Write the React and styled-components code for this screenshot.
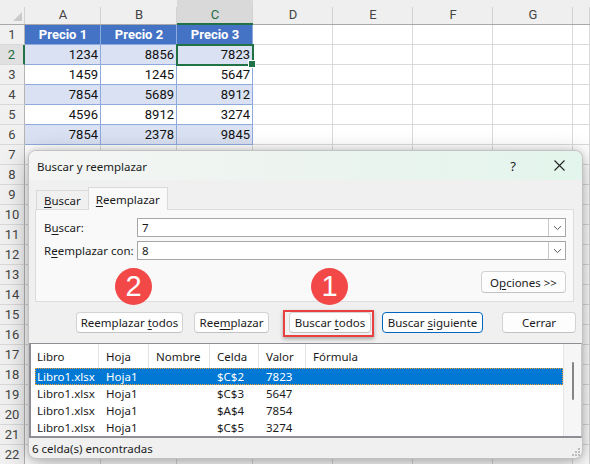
import styled, { createGlobalStyle, css } from 'styled-components';

const GlobalStyle = createGlobalStyle`
  html, body {
    margin: 0;
    padding: 0;
    background: #fff;
  }
  body {
    width: 590px;
    height: 464px;
    overflow: hidden;
  }
  * {
    box-sizing: border-box;
  }
`;

// la última columna solo asoma por el borde derecho, sin letra visible
const letters = ['A', 'B', 'C', 'D', 'E', 'F', 'G', ''];

const table = [
  ['Precio 1', 'Precio 2', 'Precio 3'],
  [1234, 8856, 7823],
  [1459, 1245, 5647],
  [7854, 5689, 8912],
  [4596, 8912, 3274],
  [7854, 2378, 9845],
];

const columns = [
  { label: 'Libro', w: 68 },
  { label: 'Hoja', w: 50 },
  { label: 'Nombre', w: 61 },
  { label: 'Celda', w: 49 },
  { label: 'Valor', w: 47 },
  { label: 'Fórmula' },
];

const results = [
  ['Libro1.xlsx', 'Hoja1', '', '$C$2', '7823'],
  ['Libro1.xlsx', 'Hoja1', '', '$C$3', '5647'],
  ['Libro1.xlsx', 'Hoja1', '', '$A$4', '7854'],
  ['Libro1.xlsx', 'Hoja1', '', '$C$5', '3274'],
];

const Screen = styled.div`
  position: relative;
  width: 590px;
  height: 464px;
  overflow: hidden;
  font-family: Roboto, 'Noto Sans', sans-serif;
`;

/* ---------- hoja de cálculo ---------- */

const Sheet = styled.div`
  display: grid;
  grid-template-columns: 25px 76px 76px 76px 80px 80px 80px 80px 17px;
  grid-template-rows: 25px;
  grid-auto-rows: 20px;
  width: max-content;
  font-size: 13px;
`;

const headLine = css`
  background: linear-gradient(#d2d2d2, #d2d2d2) right bottom / 1px 17px no-repeat,
    ${({ $active }) => ($active ? '#d9d9d9' : '#efefef')};
`;

const Corner = styled.div`
  position: relative;
  ${headLine};
  border-bottom: 1px solid #a8a8a8;

  &::after {
    content: '';
    position: absolute;
    right: 3px;
    bottom: 3px;
    width: 9px;
    height: 9px;
    background: #cacaca;
    clip-path: polygon(100% 0, 100% 100%, 0 100%);
  }
`;

const ColHead = styled.div`
  display: flex;
  align-items: center;
  justify-content: center;
  padding-top: 5px;
  color: ${({ $active }) => ($active ? '#1d6b40' : '#444')};
  ${headLine};
  border-bottom: ${({ $active }) =>
    $active ? '2px solid #217346' : '1px solid #a8a8a8'};
`;

const RowHead = styled.div`
  display: flex;
  align-items: center;
  justify-content: center;
  color: ${({ $active }) => ($active ? '#1d6b40' : '#444')};
  background: ${({ $active }) => ($active ? '#e0e0e0' : '#f0f0f0')};
  border-bottom: 1px solid #d8d8d8;
  border-right: ${({ $active }) =>
    $active ? '2px solid #217346' : '1px solid #b4b4b4'};
`;

const tones = {
  head: '#4472c4',
  band: '#d9e1f2',
  plain: '#ffffff',
};

const Cell = styled.div`
  position: relative;
  display: flex;
  align-items: center;
  justify-content: flex-end;
  padding: 0 2px 0 3px;
  color: #111;
  background: ${({ $tone }) => ($tone ? tones[$tone] : '#fff')};
  border-right: 1px solid ${({ $tone }) => ($tone ? '#8ea9db' : '#dadada')};
  border-bottom: 1px solid ${({ $tone }) => ($tone ? '#8ea9db' : '#dadada')};

  ${({ $tone }) =>
    $tone === 'head' &&
    css`
      justify-content: center;
      color: #fff;
      font-weight: 700;
    `}

  ${({ $active }) =>
    $active &&
    css`
      z-index: 1;
      outline: 2px solid #217346;
      outline-offset: -1px;

      &::after {
        content: '';
        position: absolute;
        right: -4px;
        bottom: -4px;
        width: 6px;
        height: 6px;
        background: #217346;
        border: 1px solid #fff;
      }
    `}
`;

/* ---------- cuadro de diálogo ---------- */

const Dialog = styled.div`
  position: absolute;
  left: 28px;
  top: 150px;
  width: 555px;
  height: 309px;
  display: flex;
  flex-direction: column;
  background: #f0f0f0;
  border: 1px solid #c2c2c2;
  border-radius: 8px;
  box-shadow: 0 6px 24px rgba(0, 0, 0, 0.3), 0 0 6px rgba(0, 0, 0, 0.14);
  overflow: hidden;
  font-family: 'Noto Sans', sans-serif;
  font-size: 11px;
  color: #1b1b1b;

  u {
    text-underline-offset: 2px;
  }
`;

const TitleBar = styled.div`
  display: flex;
  align-items: center;
  height: 29px;
  padding-left: 8px;
  background: linear-gradient(90deg, #f4f5f4 0%, #edf4f0 45%, #e3f5ec 100%);
`;

const Title = styled.span`
  flex: 1;
  padding-top: 1px;
  font-size: 11.5px;
`;

const TitleButton = styled.div`
  display: flex;
  align-items: center;
  justify-content: center;
  width: 46px;
  height: 29px;
  font-size: 13px;
  color: #222;
`;

const Tabs = styled.div`
  display: flex;
  align-items: flex-end;
  height: 22px;
  margin: 7px 0 0 7px;
`;

const Tab = styled.div`
  position: relative;
  display: flex;
  align-items: center;
  padding: 1px 7px 0;
  height: ${({ $active }) => ($active ? '23px' : '19px')};
  margin-bottom: ${({ $active }) => ($active ? '-1px' : '0')};
  background: ${({ $active }) => ($active ? '#f9f9f9' : '#f0f0f0')};
  border: 1px solid #d9d9d9;
  border-bottom: none;
  border-right: ${({ $active }) => ($active ? '1px solid #d9d9d9' : 'none')};
  font-size: 11.5px;
  z-index: ${({ $active }) => ($active ? 1 : 0)};
`;

const Panel = styled.div`
  height: 93px;
  margin: 0 8px 0 6px;
  padding: 8px 7px 8px 8px;
  background: #f9f9f9;
  border: 1px solid #dcdcdc;
`;

const FieldGrid = styled.div`
  display: grid;
  grid-template-columns: 93px 1fr;
  row-gap: 4px;
  align-items: center;
`;

const Label = styled.span`
  font-size: 11.5px;
`;

const Combo = styled.div`
  display: flex;
  height: 19px;
  background: #fff;
  border: 1px solid #a6a6a6;
`;

const ComboValue = styled.span`
  flex: 1;
  padding-left: 4px;
  line-height: 17px;
  font-size: 11.5px;
`;

const ComboArrow = styled.span`
  display: flex;
  align-items: center;
  justify-content: center;
  width: 17px;
  border-left: 1px solid #c8c8c8;
`;

const OptionsRow = styled.div`
  display: flex;
  justify-content: flex-end;
  margin-top: 11px;
`;

const Button = styled.div`
  display: flex;
  align-items: center;
  justify-content: center;
  width: ${({ $w }) => $w}px;
  height: ${({ $h }) => $h || 21}px;
  margin-left: ${({ $space }) => $space || 0}px;
  background: #fdfdfd;
  border: 1px solid ${({ $primary }) => ($primary ? '#0067c0' : '#d2d2d2')};
  border-bottom-color: ${({ $primary }) => ($primary ? '#0067c0' : '#c2c2c2')};
  border-radius: 4px;
  font-size: 11.5px;
  white-space: nowrap;
`;

const ButtonRow = styled.div`
  display: flex;
  justify-content: flex-end;
  align-items: center;
  gap: 11px;
  margin: 10px 6px 0 0;
`;

const Highlight = styled.div`
  position: relative;
  display: flex;
  margin-left: 9px;

  &::after {
    content: '';
    position: absolute;
    inset: -2px -3px -4px -6px;
    border: 2px solid #e8403f;
    box-shadow: 0 2px 4px rgba(0, 0, 0, 0.3);
  }
`;

const Badge = styled.div`
  position: absolute;
  left: ${({ $x }) => $x}px;
  top: ${({ $y }) => $y}px;
  width: 37px;
  height: 37px;
  display: flex;
  align-items: center;
  justify-content: center;
  border-radius: 50%;
  background: #f24848;
  color: #fff;
  font-family: 'Liberation Sans', Arial, sans-serif;
  font-size: 29px;
  line-height: 1;
  z-index: 2;
`;

const ListBox = styled.div`
  display: flex;
  height: 95px;
  margin-top: 10px;
  background: #fff;
  border-top: 1px solid #8e8e94;
  border-left: 2px solid #8e8e94;
  border-bottom: 2px solid #8e8e94;
  border-right: 1px solid #c9c9c9;
`;

const ListMain = styled.div`
  flex: 1;
  display: flex;
  flex-direction: column;
`;

const ListHeader = styled.div`
  display: flex;
  height: 24px;
`;

const HeadCell = styled.div`
  display: flex;
  align-items: center;
  ${({ $w }) => ($w ? `width: ${$w}px;` : 'flex: 1;')}
  padding-left: ${({ $first }) => ($first ? 6 : 7)}px;
  border-right: ${({ $w }) => ($w ? '1px solid #e4e4e4' : 'none')};
  font-size: 11.5px;
`;

const Rows = styled.div`
  margin-left: 4px;
`;

const Row = styled.div`
  display: flex;
  height: 17px;
  align-items: center;
  ${({ $selected }) =>
    $selected &&
    css`
      background: #0078d4;
      color: #fff;
      outline: 1px dotted #f0a030;
      outline-offset: -1px;
    `}
`;

const RowCell = styled.span`
  ${({ $w }) => ($w ? `width: ${$w}px;` : 'flex: 1;')}
  padding-left: ${({ $first }) => ($first ? 2 : 7)}px;
  font-size: 11.5px;
  white-space: nowrap;
`;

const ScrollTrack = styled.div`
  position: relative;
  width: 18px;
  background: #f6f6f6;
  border-left: 1px solid #e6e6e6;
`;

const ScrollThumb = styled.div`
  position: absolute;
  left: 8px;
  top: 18px;
  width: 2px;
  height: 38px;
  border-radius: 1px;
  background: #858585;
`;

const StatusBar = styled.div`
  position: relative;
  flex: 1;
  display: flex;
  align-items: center;
  padding-left: 3px;
  font-size: 11.5px;
`;

const Grip = styled.svg`
  position: absolute;
  right: 2px;
  bottom: 2px;
`;

const Chevron = () => (
  <svg width="9" height="6" viewBox="0 0 9 6">
    <path d="M1 1.2 L4.5 4.6 L8 1.2" fill="none" stroke="#5a5a5a" strokeWidth="1" />
  </svg>
);

const CloseIcon = () => (
  <svg width="11" height="11" viewBox="0 0 11 11">
    <path d="M0.5 0.5 L10.5 10.5 M10.5 0.5 L0.5 10.5" stroke="#222" strokeWidth="1.1" />
  </svg>
);

const SheetGrid = () => {
  const cells = [];
  cells.push(<Corner key="corner" />);
  letters.forEach((l, c) =>
    cells.push(
      <ColHead key={`c${c}`} $active={l === 'C'}>
        {l}
      </ColHead>
    )
  );
  for (let r = 1; r <= 22; r++) {
    cells.push(
      <RowHead key={`h${r}`} $active={r === 2}>
        {r}
      </RowHead>
    );
    letters.forEach((l, c) => {
      const inTable = r <= 6 && c < 3;
      let tone;
      if (inTable) tone = r === 1 ? 'head' : r % 2 === 0 ? 'band' : 'plain';
      cells.push(
        <Cell key={`${c}-${r}`} $tone={tone} $active={r === 2 && c === 2}>
          {inTable ? table[r - 1][c] : ''}
        </Cell>
      );
    });
  }
  return <Sheet>{cells}</Sheet>;
};

const App = () => (
  <>
    <GlobalStyle />
    <Screen>
      <SheetGrid />

      <Dialog>
        <TitleBar>
          <Title>Buscar y reemplazar</Title>
          <TitleButton>?</TitleButton>
          <TitleButton>
            <CloseIcon />
          </TitleButton>
        </TitleBar>

        <Tabs>
          <Tab>
            <span>
              <u>B</u>uscar
            </span>
          </Tab>
          <Tab $active>
            <span>
              <u>R</u>eemplazar
            </span>
          </Tab>
        </Tabs>

        <Panel>
          <FieldGrid>
            <Label>
              B<u>u</u>scar:
            </Label>
            <Combo>
              <ComboValue>7</ComboValue>
              <ComboArrow>
                <Chevron />
              </ComboArrow>
            </Combo>
            <Label>
              R<u>e</u>emplazar con:
            </Label>
            <Combo>
              <ComboValue>8</ComboValue>
              <ComboArrow>
                <Chevron />
              </ComboArrow>
            </Combo>
          </FieldGrid>
          <OptionsRow>
            <Button $w={85} $h={22}>
              O<u>p</u>ciones &gt;&gt;
            </Button>
          </OptionsRow>
        </Panel>

        <ButtonRow>
          <Button $w={107}>
            Reemplazar&nbsp;<u>t</u>odos
          </Button>
          <Button $w={75}>
            Ree<u>m</u>plazar
          </Button>
          <Highlight>
            <Button $w={82}>
              Buscar&nbsp;<u>t</u>odos
            </Button>
          </Highlight>
          <Button $w={101} $primary>
            Buscar&nbsp;<u>s</u>iguiente
          </Button>
          <Button $w={74} $space={8}>
            Cerrar
          </Button>
        </ButtonRow>

        <ListBox>
          <ListMain>
            <ListHeader>
              {columns.map((col, i) => (
                <HeadCell key={col.label} $w={col.w} $first={i === 0}>
                  {col.label}
                </HeadCell>
              ))}
            </ListHeader>
            <Rows>
              {results.map((res, i) => (
                <Row key={i} $selected={i === 0}>
                  {res.map((val, c) => (
                    <RowCell
                      key={c}
                      $first={c === 0}
                      $w={c === 0 ? columns[0].w - 4 : columns[c].w}
                    >
                      {val}
                    </RowCell>
                  ))}
                  <RowCell />
                </Row>
              ))}
            </Rows>
          </ListMain>
          <ScrollTrack>
            <ScrollThumb />
          </ScrollTrack>
        </ListBox>

        <StatusBar>
          6 celda(s) encontradas
          <Grip width="10" height="10" viewBox="0 0 10 10">
            <rect x="8" y="2" width="2" height="2" fill="#bdbdbd" />
            <rect x="5" y="5" width="2" height="2" fill="#bdbdbd" />
            <rect x="8" y="5" width="2" height="2" fill="#bdbdbd" />
            <rect x="2" y="8" width="2" height="2" fill="#bdbdbd" />
            <rect x="5" y="8" width="2" height="2" fill="#bdbdbd" />
            <rect x="8" y="8" width="2" height="2" fill="#bdbdbd" />
          </Grip>
        </StatusBar>

        <Badge $x={86} $y={117}>2</Badge>
        <Badge $x={282} $y={117}>1</Badge>
      </Dialog>
    </Screen>
  </>
);

export default App;
